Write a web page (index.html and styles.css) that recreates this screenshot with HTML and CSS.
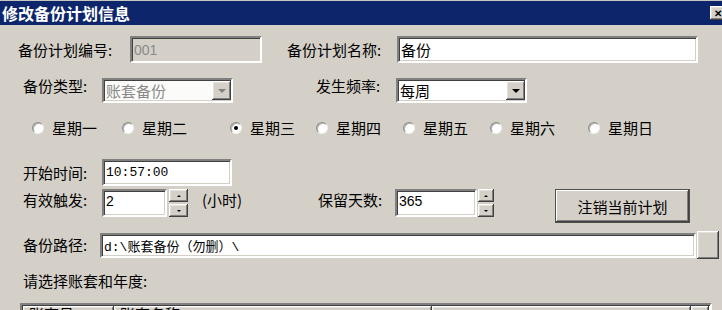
FILE: index.html
```html
<!DOCTYPE html>
<html lang="zh-CN">
<head>
    <meta charset="UTF-8">
    <title>修改备份计划信息</title>
    <link rel="stylesheet" href="styles.css">
</head>
<body>
    <div class="dialog">
        <div class="titlebar">
            <span>修改备份计划信息</span>
            <span class="close raised">✕</span>
        </div>

        <!-- plan id / name -->
        <div class="row row-id">
            <span class="lbl w112">备份计划编号:</span>
            <div class="field disabled w132">001</div>
            <span class="lbl w110 ml25">备份计划名称:</span>
            <div class="field w301">备份</div>
        </div>

        <!-- type / frequency -->
        <div class="row row-type">
            <span class="lbl lbl-hi w79">备份类型:</span>
            <div class="field select w131 greyed">
                <span>账套备份</span>
                <span class="drop raised"><i class="arrow off"></i></span>
            </div>
            <span class="lbl lbl-hi w80 ml83">发生频率:</span>
            <div class="field select w131">
                <span>每周</span>
                <span class="drop raised"><i class="arrow"></i></span>
            </div>
        </div>

        <!-- weekdays -->
        <div class="days">
            <div class="day"><span class="radio"></span>星期一</div>
            <div class="day"><span class="radio"></span>星期二</div>
            <div class="day"><span class="radio checked"></span>星期三</div>
            <div class="day"><span class="radio"></span>星期四</div>
            <div class="day"><span class="radio"></span>星期五</div>
            <div class="day"><span class="radio"></span>星期六</div>
            <div class="day"><span class="radio"></span>星期日</div>
        </div>

        <div class="row row-time">
            <span class="lbl w79">开始时间:</span>
            <div class="field w130 mono">10:57:00</div>
        </div>

        <div class="row row-trigger">
            <span class="lbl w79">有效触发:</span>
            <div class="field num w65 h28">2</div>
            <div class="spin w19 ml2">
                <span class="raised"><i class="tri up"></i></span>
                <span class="raised"><i class="tri"></i></span>
            </div>
            <span class="lbl w43 ml14">(小时)</span>
            <span class="lbl w77 ml73">保留天数:</span>
            <div class="field num w82 h28">365</div>
            <div class="spin w16 ml1">
                <span class="raised"><i class="tri up"></i></span>
                <span class="raised"><i class="tri"></i></span>
            </div>
            <button class="btn raised ml62">注销当前计划</button>
        </div>

        <div class="row row-path">
            <span class="lbl w77">备份路径:</span>
            <div class="field path w596">d:\账套备份（勿删）\</div>
            <span class="browse raised"></span>
        </div>

        <div class="hint">请选择账套和年度:</div>

        <div class="grid">
            <div class="grid-head">
                <span class="hcell raised c1">账套号</span>
                <span class="hcell raised c2">账套名称</span>
                <span class="hcell raised c3"></span>
                <span class="hcell raised c4"></span>
            </div>
        </div>
    </div>
</body>
</html>
```

FILE: styles.css
```css
body {
    margin: 0;
    width: 722px;
    height: 310px;
    overflow: hidden;
    background-color: #d4d0c8;
    font-family: "Noto Sans CJK SC", sans-serif;
    font-size: 15px;
    color: #000;
}

.raised {
    background-color: #d4d0c8;
    box-shadow: inset -1px -1px #404040, inset 1px 1px #fff, inset -2px -2px #808080, inset 2px 2px #e4e1da;
}

/* title bar */
.titlebar {
    box-sizing: border-box;
    height: 25px;
    border-top: 1px solid #c8c6c0;
    background-color: #0c256b;
    color: #fff;
    font-size: 16px;
    font-weight: bold;
    display: flex;
    align-items: center;
    justify-content: space-between;
    padding-left: 2px;
    overflow: hidden;
}

.close {
    width: 16px;
    height: 14px;
    margin-right: -4px;
    color: #000;
    font-size: 10px;
    line-height: 14px;
    text-align: center;
    font-weight: bold;
}

/* rows */
.row {
    display: flex;
    align-items: center;
    padding-left: 23px;
}

.row-id {
    margin-top: 11px;
    padding-left: 18px;
}

.row-type {
    margin-top: 15px;
    align-items: flex-start;
}

.row-time {
    margin-top: 23px;
}

.row-trigger {
    margin-top: 3px;
    align-items: flex-start;
}

.row-path {
    margin-top: 9px;
}

.lbl {
    flex: none;
    line-height: 22px;
    white-space: nowrap;
}

.lbl-hi {
    line-height: 16px;
}

/* sunken text boxes */
.field {
    flex: none;
    box-sizing: border-box;
    height: 27px;
    padding: 0 2px;
    background-color: #fff;
    border: 2px solid;
    border-color: #808080 #fff #fff #808080;
    box-shadow: inset 1px 1px #404040, inset -1px -1px #d4d0c8;
    display: flex;
    align-items: center;
    white-space: nowrap;
    overflow: hidden;
}

.field.disabled {
    background-color: #d4d0c8;
    color: #8a8a8a;
    font-family: "Liberation Sans", sans-serif;
    font-size: 14px;
}

.select {
    height: 25px;
    padding-right: 0;
    justify-content: space-between;
}

.select.greyed {
    background-color: #fbfbf9;
    color: #8a8a8a;
}

.drop {
    width: 19px;
    height: 19px;
    display: flex;
    align-items: center;
    justify-content: center;
}

.arrow {
    width: 0;
    height: 0;
    border-left: 4px solid transparent;
    border-right: 4px solid transparent;
    border-top: 4px solid #000;
}

.arrow.off {
    border-top-color: #808080;
}

.mono {
    font-family: "Liberation Mono", monospace;
    font-size: 13px;
}

.num {
    font-family: "Liberation Sans", sans-serif;
    font-size: 14px;
    align-items: flex-start;
    line-height: 20px;
}

.path {
    height: 25px;
    font-family: "Liberation Mono", "Noto Sans CJK SC", monospace;
    font-size: 13px;
}

.h28 { height: 28px; }

/* spinner */
.spin {
    flex: none;
    height: 28px;
    display: flex;
    flex-direction: column;
    justify-content: space-between;
}

.spin span {
    height: 13px;
    display: flex;
    align-items: center;
    justify-content: center;
}

.tri {
    width: 0;
    height: 0;
    border-left: 2px solid transparent;
    border-right: 2px solid transparent;
    border-top: 2px solid #000;
}

.tri.up {
    border-top: 0;
    border-bottom: 2px solid #000;
}

.btn {
    flex: none;
    width: 133px;
    height: 32px;
    border: 0;
    padding: 0;
    font-family: "Noto Sans CJK SC", sans-serif;
    font-size: 15px;
    color: #000;
    box-shadow: inset -1px -1px #404040, inset 1px 1px #fff, inset -2px -2px #808080, 0 0 0 1px #505050;
    margin-top: 1px;
}

.browse {
    flex: none;
    width: 22px;
    height: 28px;
    margin-left: 1px;
}

/* weekday radios */
.days {
    margin-top: 17px;
    height: 16px;
    padding-left: 32px;
    display: grid;
    grid-template-columns: 90px 108px 86px 87px 87px 98px auto;
}

.day {
    display: flex;
    align-items: center;
    gap: 8px;
    line-height: 16px;
    white-space: nowrap;
}

.radio {
    flex: none;
    box-sizing: border-box;
    width: 12px;
    height: 12px;
    border-radius: 50%;
    background-color: #fff;
    border: 1px solid;
    border-color: #8c8c8c #f0f0f0 #f0f0f0 #8c8c8c;
    box-shadow: inset 1px 1px #b0b0b0;
    display: flex;
    align-items: center;
    justify-content: center;
}

.radio.checked::after {
    content: "";
    width: 4px;
    height: 4px;
    border-radius: 50%;
    background-color: #000;
}

.hint {
    margin-top: 12px;
    padding-left: 23px;
    line-height: 20px;
}

/* account table */
.grid {
    margin: 12px 0 0 20px;
    width: 692px;
    height: 40px;
    box-sizing: border-box;
    border: 2px solid;
    border-color: #808080 #fff #fff #808080;
    box-shadow: inset 1px 1px #404040;
    background-color: #fff;
    padding: 1px 0 0 1px;
}

.grid-head {
    display: flex;
    height: 22px;
}

.hcell {
    box-sizing: border-box;
    padding: 0 6px;
    line-height: 16px;
    font-size: 15px;
    white-space: nowrap;
    overflow: hidden;
}

.c1 { width: 91px; }
.c2 { width: 318px; }
.c3 { width: 259px; }
.c4 { width: 18px; }

/* widths and offsets */
.w16 { width: 16px; }
.w19 { width: 19px; }
.w43 { width: 43px; }
.w65 { width: 65px; }
.w77 { width: 77px; }
.w79 { width: 79px; }
.w80 { width: 80px; }
.w82 { width: 82px; }
.w110 { width: 110px; }
.w112 { width: 112px; }
.w130 { width: 130px; }
.w131 { width: 131px; }
.w132 { width: 132px; }
.w301 { width: 301px; }
.w596 { width: 596px; }

.ml1 { margin-left: 1px; }
.ml2 { margin-left: 2px; }
.ml14 { margin-left: 14px; }
.ml25 { margin-left: 25px; }
.ml62 { margin-left: 62px; }
.ml73 { margin-left: 73px; }
.ml83 { margin-left: 83px; }
```
